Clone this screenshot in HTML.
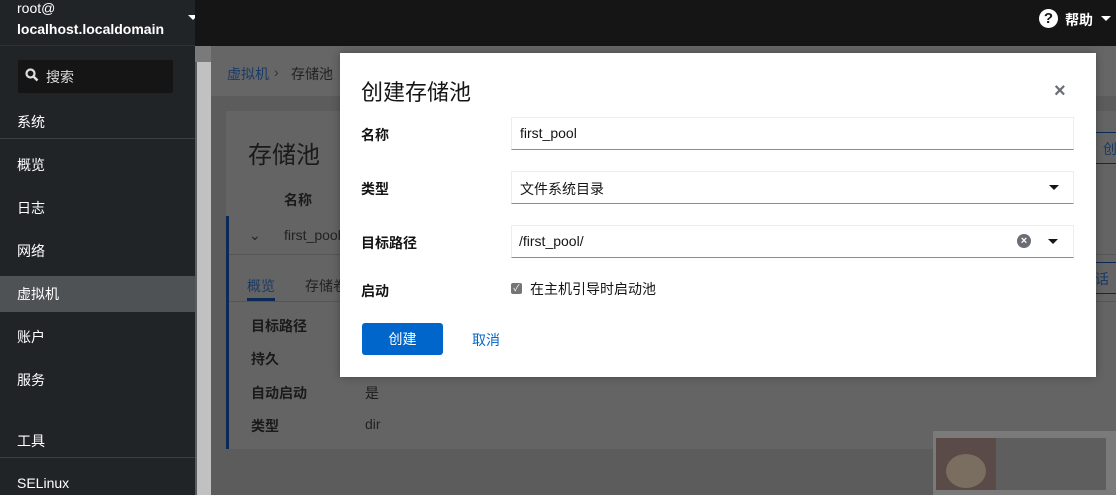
<!DOCTYPE html>
<html><head><meta charset="utf-8"><style>
*{box-sizing:border-box;margin:0;padding:0}
body{width:1116px;height:495px;overflow:hidden;position:relative;background:#5c5c5c;font-family:"Liberation Sans","Noto Sans CJK SC",sans-serif;font-size:14px}
.abs{position:absolute}
#side{left:0;top:0;width:195px;height:495px;background:#212427;color:#fff}
#top{left:195px;top:0;width:921px;height:46px;background:#151515}
.nav{position:absolute;left:17px;font-size:14px;color:#fff}
.sep{position:absolute;left:0;width:195px;height:1px;background:#3c3f42}
</style></head><body>
<div id="side" class="abs">
  <div class="nav" style="top:0;font-size:14px">root@</div>
  <div class="nav" style="top:21px;font-weight:bold">localhost.localdomain</div>
  <div class="abs" style="left:188px;top:15px;border-left:5px solid transparent;border-right:5px solid transparent;border-top:5px solid #fff"></div>
  <div class="sep" style="top:45px;background:#2f3235"></div>
  <div class="abs" style="left:18px;top:60px;width:155px;height:33px;background:#151515;border-radius:2px"></div>
  <svg class="abs" style="left:25px;top:68px" width="14" height="14" viewBox="0 0 14 14"><circle cx="5.5" cy="5.5" r="4" stroke="#ddd" stroke-width="2.2" fill="none"/><path d="M8.5 8.5L12.5 12.5" stroke="#ddd" stroke-width="2.6"/></svg>
  <div class="nav" style="left:46px;top:67px;color:#ddd">搜索</div>
  <div class="nav" style="top:112px">系统</div>
  <div class="sep" style="top:138px"></div>
  <div class="nav" style="top:155px">概览</div>
  <div class="nav" style="top:198px">日志</div>
  <div class="nav" style="top:241px">网络</div>
  <div class="abs" style="left:0;top:276px;width:195px;height:36px;background:#4f5255"></div>
  <div class="nav" style="top:284px">虚拟机</div>
  <div class="nav" style="top:327px">账户</div>
  <div class="nav" style="top:370px">服务</div>
  <div class="nav" style="top:431px">工具</div>
  <div class="sep" style="top:457px"></div>
  <div class="nav" style="top:475px">SELinux</div>
</div>
<div id="top" class="abs"></div>
<div class="abs" style="left:1039px;top:9px;width:19px;height:19px;border-radius:50%;background:#fff;color:#151515;font-weight:bold;font-size:15px;text-align:center;line-height:19px">?</div>
<div class="abs" style="left:1065px;top:10px;color:#fff;font-weight:bold">帮助</div>
<div class="abs" style="left:1101px;top:16px;border-left:5px solid transparent;border-right:5px solid transparent;border-top:5px solid #fff"></div>
<div class="abs" style="background:#c1c1c1;left:197px;width:14px;top:62px;height:433px"></div>
<div class="abs" style="left:195px;top:46px;width:16px;height:16px;background:#7a7a7a"></div>
<div class="abs" style="left:211px;top:46px;width:905px;height:50px;background:#666"></div>
<div class="abs" style="left:227px;top:64px;color:#1a3a66">虚拟机</div>
<div class="abs" style="left:274px;top:64px;color:#333">›</div>
<div class="abs" style="left:291px;top:64px;color:#222">存储池</div>
<div class="abs" style="left:226px;top:111px;width:890px;height:338px;background:#646464"></div>
<div class="abs" style="left:248px;top:135px;font-size:24px;color:#1a1a1a">存储池</div>
<div class="abs" style="left:284px;top:190px;font-weight:bold;color:#1a1a1a">名称</div>
<div class="abs" style="left:226px;top:216px;width:3px;height:233px;background:#0a2a55"></div>
<div class="abs" style="left:229px;top:254px;width:887px;height:1px;background:#555"></div>
<div class="abs" style="left:249px;top:227px;color:#222">⌄</div>
<div class="abs" style="left:284px;top:227px;color:#222">first_pool</div>
<div class="abs" style="left:247px;top:276px;color:#1a3a66">概览</div>
<div class="abs" style="left:247px;top:298px;width:28px;height:3px;background:#0a2a55"></div>
<div class="abs" style="left:305px;top:276px;color:#222">存储卷</div>
<div class="abs" style="left:229px;top:301px;width:887px;height:1px;background:#555"></div>
<div class="abs" style="left:251px;top:316px;font-weight:bold;color:#1a1a1a">目标路径</div>
<div class="abs" style="left:251px;top:349px;font-weight:bold;color:#1a1a1a">持久</div>
<div class="abs" style="left:251px;top:383px;font-weight:bold;color:#1a1a1a">自动启动</div>
<div class="abs" style="left:365px;top:383px;color:#1a1a1a">是</div>
<div class="abs" style="left:251px;top:416px;font-weight:bold;color:#1a1a1a">类型</div>
<div class="abs" style="left:365px;top:416px;color:#222">dir</div>
<div class="abs" style="left:1095px;top:132px;width:21px;height:32px;border:1px solid #0a2a55;border-right:none;color:#1a3a66;padding:6px 0 0 7px">创</div>
<div class="abs" style="left:1095px;top:262px;width:21px;height:32px;border-top:1px solid #0a2a55;border-bottom:1px solid #0a2a55;color:#1a3a66;padding:6px 0 0 0">话</div>
<div class="abs" style="left:933px;top:431px;width:183px;height:64px;background:#7a7a7a"></div>
<div class="abs" style="left:936px;top:438px;width:170px;height:52px;background:#5e5e5e"></div>
<div class="abs" style="left:936px;top:438px;width:60px;height:52px;background:#5a4a48"></div>
<div class="abs" style="left:946px;top:454px;width:40px;height:34px;background:#7a6e60;border-radius:50%"></div>
<!-- modal -->
<div class="abs" style="left:340px;top:53px;width:756px;height:324px;background:#fff;box-shadow:0 0 8px rgba(0,0,0,.3)">
  <div class="abs" style="left:21px;top:22px;font-size:22px;color:#151515">创建存储池</div>
  <div class="abs" style="left:714px;top:27px;font-size:20px;color:#6a6e73;font-weight:bold">×</div>
  <div class="abs" style="left:21px;top:72px;font-weight:bold;color:#151515">名称</div>
  <div class="abs" style="left:21px;top:126px;font-weight:bold;color:#151515">类型</div>
  <div class="abs" style="left:21px;top:180px;font-weight:bold;color:#151515">目标路径</div>
  <div class="abs" style="left:21px;top:228px;font-weight:bold;color:#151515">启动</div>
  <div class="abs" style="left:171px;top:64px;width:563px;height:33px;border:1px solid #ededed;border-bottom:1px solid #8a8d90;padding:7px 8px;color:#151515">first_pool</div>
  <div class="abs" style="left:171px;top:118px;width:563px;height:33px;border:1px solid #ededed;border-bottom:1px solid #8a8d90;padding:7px 8px;color:#151515">文件系统目录</div>
  <div class="abs" style="left:709px;top:132px;border-left:5px solid transparent;border-right:5px solid transparent;border-top:5px solid #151515"></div>
  <div class="abs" style="left:171px;top:172px;width:563px;height:33px;border:1px solid #ededed;border-bottom:1px solid #8a8d90;padding:7px 7px;color:#151515">/first_pool/</div>
  <div class="abs" style="left:677px;top:181px;width:14px;height:14px;border-radius:50%;background:#6a6e73;color:#fff;font-size:11px;font-weight:bold;text-align:center;line-height:14px">×</div>
  <div class="abs" style="left:708px;top:186px;border-left:5px solid transparent;border-right:5px solid transparent;border-top:5px solid #151515"></div>
  <div class="abs" style="left:171px;top:230px;width:11px;height:11px;background:#757575;border-radius:2px;color:#fff;font-size:9px;line-height:11px;text-align:center">✓</div>
  <div class="abs" style="left:190px;top:226px;color:#151515">在主机引导时启动池</div>
  <div class="abs" style="left:22px;top:270px;width:81px;height:32px;background:#0066cc;border-radius:3px;color:#fff;text-align:center;line-height:32px">创建</div>
  <div class="abs" style="left:132px;top:277px;color:#0066cc">取消</div>
</div>
</body></html>
